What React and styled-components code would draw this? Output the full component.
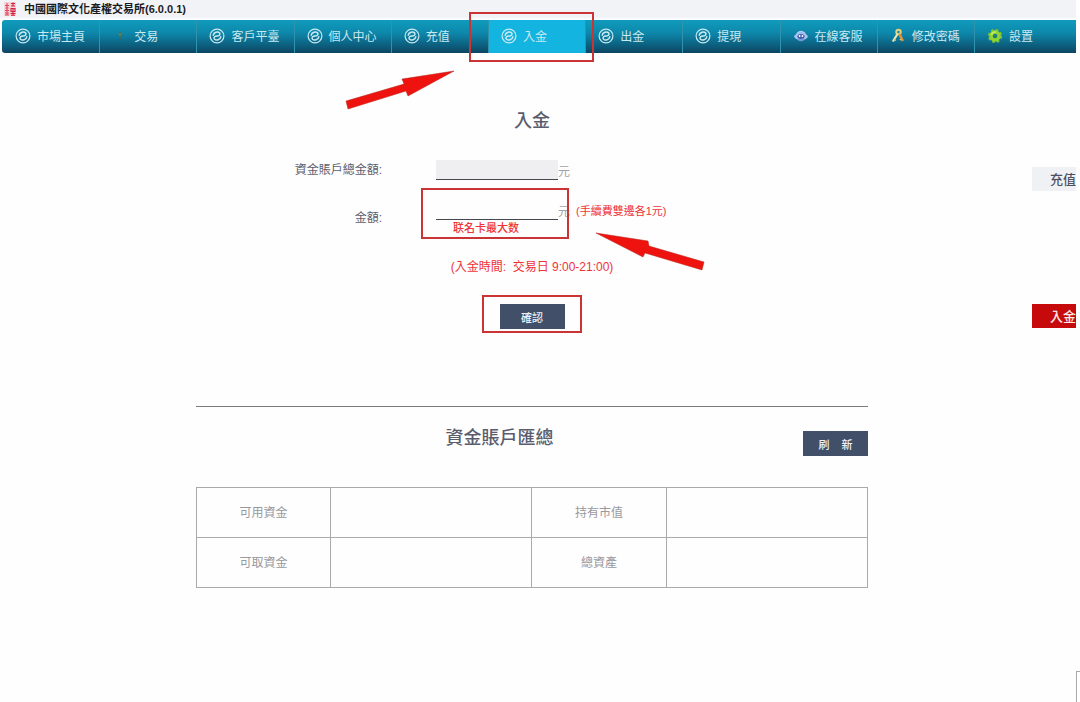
import React from "react";
import styled, { createGlobalStyle, css } from "styled-components";

const GlobalStyle = createGlobalStyle`
  *, *::before, *::after { box-sizing: border-box; }
  html { background: #fefefe; }
  body {
    margin: 0;
    font-family: "Liberation Sans", "Noto Sans CJK TC", sans-serif;
    font-size: 12px;
    color: #5d606e;
  }
  button, input { font: inherit; }
`;

const navy = "#414f68";
const alertRed = "#ee3338";
const markRed = "#cb3434";

const Page = styled.div`
  position: relative;
  min-height: 100vh;
  padding-right: 4px;
  overflow-x: clip;
`;

const TitleBar = styled.header`
  display: flex;
  align-items: center;
  gap: 8px;
  height: 20px;
  padding: 0 4px 2px;
  background: linear-gradient(#f2f3f7 18px, #fafcfd 18px);
`;

const AppTitle = styled.h1`
  margin: 0;
  font-size: 11px;
  line-height: 16px;
  font-weight: 700;
  color: #1b1b1f;
`;

const Nav = styled.nav`
  display: flex;
  height: 33px;
  margin-left: 2px;
  border-radius: 3px 0 0 3px;
  background: linear-gradient(#109bbd, #0d87aa 40%, #0d5675 85%, #0c4560);
`;

const NavItem = styled.div`
  position: relative;
  flex: 0 0 9.05%;
  border-left: 1px solid #2f93ae;

  &:first-child { border-left-color: transparent; }
  &:last-child { flex: 1; }
`;

const NavLink = styled.a`
  display: flex;
  align-items: center;
  gap: 6px;
  height: 100%;
  padding: 0 0 2px 12px;
  font-size: 12px;
  white-space: nowrap;
  text-decoration: none;
  color: #c9e9f2;
  ${(p) => p.$active && css`background: #13b4df;`}

  svg { flex: none; }
`;

const Body = styled.div`
  display: grid;
  grid-template-columns: 49fr 168fr 52fr;
`;

const Main = styled.main`
  grid-column: 2;
  min-width: 0;
`;

const Heading = styled.h2`
  margin: 0;
  font-size: 18px;
  line-height: 24px;
  font-weight: 500;
  text-align: center;
  color: #5a5d6e;
`;

const DepositForm = styled.form`
  display: flex;
  flex-direction: column;
  padding: 56px 0 77px;
  border-bottom: 1px solid #777b7e;
`;

const Fields = styled.div`
  display: grid;
  grid-template-columns: 186px 1fr;
  column-gap: 54px;
  row-gap: 20px;
  align-items: center;
  margin-top: 27px;
`;

const Label = styled.label`
  text-align: right;
  line-height: 20px;
`;

const Field = styled.div`
  position: relative;
`;

const FieldLine = styled.div`
  display: flex;
  align-items: center;
  height: 20px;
  white-space: nowrap;
`;

const AmountInput = styled.input`
  width: 122px;
  height: 20px;
  padding: 0 4px;
  border: 0;
  border-bottom: 1px solid #45494e;
  border-radius: 0;
  outline: none;
  background: ${(p) => (p.readOnly ? "#efeff1" : "transparent")};
`;

const Unit = styled.span`
  width: 12px;
  color: #a2a2a8;
`;

const FeeHint = styled.span`
  margin-left: 6px;
  font-size: 11px;
  color: ${alertRed};
`;

const CardNote = styled.div`
  padding-left: 17px;
  font-size: 11px;
  line-height: 16px;
  font-weight: 500;
  color: ${alertRed};
`;

const TimeHint = styled.p`
  margin: 22px 0 28px;
  line-height: 18px;
  text-align: center;
  color: ${alertRed};
`;

const ActionButton = styled.button`
  width: 65px;
  height: 25px;
  padding: 0;
  border: 0;
  background: ${navy};
  color: #eef1f6;
  font-size: 11px;
  font-weight: 500;
  white-space: pre;
  cursor: pointer;
`;

const Confirm = styled.div`
  position: relative;
  align-self: center;
  display: flex;
`;

const Mark = styled.span`
  position: absolute;
  z-index: 2;
  inset: ${(p) => p.$inset};
  width: ${(p) => p.$width};
  border: 2px solid ${markRed};
  pointer-events: none;
`;

const Arrow = styled.svg`
  position: absolute;
  z-index: 2;
  left: ${(p) => p.$left};
  top: ${(p) => p.$top};
  fill: #ee130e;
  stroke: #b5221c;
  stroke-width: 0.5;
  pointer-events: none;
`;

const Summary = styled.section`
  padding-top: 19px;
`;

const SummaryHead = styled.div`
  display: flex;
  height: 30px;

  ${Heading} { flex: 1; }
  ${ActionButton} { align-self: flex-end; }
`;

const FundsTable = styled.table`
  width: 100%;
  margin-top: 31px;
  border-collapse: collapse;
  table-layout: fixed;

  th, td {
    height: 50px;
    padding: 0 0 2px;
    border: 1px solid #a9a9ac;
  }
  th {
    width: 20%;
    font-size: 12px;
    font-weight: 400;
    color: #98989d;
  }
`;

const SideRail = styled.aside`
  display: flex;
  flex-direction: column;
  align-items: flex-end;
  gap: 113px;
  padding-top: 114px;
`;

const SideButton = styled.button`
  width: 44px;
  height: 24px;
  padding: 0 0 2px 18px;
  border: 0;
  overflow: hidden;
  white-space: nowrap;
  text-align: left;
  font-size: 13px;
  font-weight: 500;
  background: ${(p) => (p.$primary ? "#c60a0c" : "#f0f1f4")};
  color: ${(p) => (p.$primary ? "#ffe9e6" : "#4d505f")};
  cursor: pointer;
`;

const CornerPanel = styled.div`
  position: absolute;
  right: 0;
  bottom: 0;
  width: 4px;
  height: 31px;
  border-left: 1px solid #a8a8a8;
  border-top: 1px solid #a8a8a8;
`;

const SealIcon = () => (
  <svg width="12" height="14" viewBox="0 0 12 14" aria-hidden="true">
    <rect width="12" height="14" fill="#f8d3d8" />
    <g fill="none" stroke="#d94a5e" strokeWidth="1.1">
      <path d="M3 1v2M1 3.500h4M1.500 6h3M3 4v4M1 8.500h4M1 11h4M3 9v4M1 13h4" />
      <path d="M7 1.500h4M9 .5v4M7 4h4M7 6.500h4v3H7zM9 6v7M6.500 11.500h5M7 13.300h4" stroke="#cf2240" />
    </g>
  </svg>
);

const SwirlIcon = () => (
  <svg width="16" height="16" viewBox="0 0 16 16" fill="none" stroke="#cdeaf2" aria-hidden="true">
    <circle cx="8" cy="8" r="6.900" strokeWidth="1.200" />
    <path d="M4.200 7.200C4.700 4.200 8.800 3 10.700 5.100c1 1.700-.8 2.900-2.700 2.900s-3.700 1.200-2.700 2.900c1.900 2.100 6 .9 6.500-2.100" strokeWidth="1.500" strokeLinecap="round" />
  </svg>
);

const TradeIcon = () => (
  <svg width="16" height="16" viewBox="0 0 16 16" aria-hidden="true">
    <path d="M8 3.500v9" stroke="#2c6a66" strokeWidth="1.500" />
    <path d="M6.500 5h3L8 10z" fill="#6e8140" />
  </svg>
);

const SupportIcon = () => (
  <svg width="16" height="16" viewBox="0 0 16 16" aria-hidden="true">
    <path d="M3.500 8a4.500 4.500 0 0 1 9 0" fill="#8db3e8" stroke="#b4cdf4" strokeWidth="1.400" />
    <ellipse cx="8" cy="8.600" rx="6.800" ry="3.400" fill="#a9c3f2" />
    <ellipse cx="8" cy="8.400" rx="3.600" ry="2.500" fill="#4360ae" />
    <circle cx="6.600" cy="8" r=".9" fill="#fff" />
    <circle cx="9.400" cy="8" r=".9" fill="#fff" />
    <path d="M5 12.500c1.800 1 4.200 1 6 0l-1-1.500H6z" fill="#7898da" />
  </svg>
);

const KeysIcon = () => (
  <svg width="16" height="16" viewBox="0 0 16 16" fill="none" aria-hidden="true">
    <circle cx="8.500" cy="4" r="2.200" stroke="#e5d27c" strokeWidth="2" />
    <path d="M7.500 6 2.800 13.500" stroke="#e9e5b4" strokeWidth="2.200" />
    <path d="m9.500 6 3.300 7" stroke="#d9923c" strokeWidth="2.600" />
    <path d="m4.300 11.500 1.700 1M11.500 11l-1.800 1" stroke="#dcc46a" strokeWidth="1.300" />
  </svg>
);

const GearIcon = () => (
  <svg width="16" height="16" viewBox="0 0 16 16" aria-hidden="true">
    <circle cx="8" cy="8" r="5.800" fill="none" stroke="#7fc42c" strokeWidth="2.600" strokeDasharray="2.500 2.055" />
    <circle cx="8" cy="8" r="4" fill="none" stroke="#8fd431" strokeWidth="3.600" />
    <path d="M4.500 7A4 4 0 0 1 9 4" fill="none" stroke="#c9ef72" strokeWidth="1.300" />
    <ellipse cx="8.300" cy="8" rx="2.100" ry="1.500" fill="#2b7772" transform="rotate(-30 8.300 8)" />
  </svg>
);

const navItems = [
  { label: "市場主頁", Icon: SwirlIcon },
  { label: "交易", Icon: TradeIcon },
  { label: "客戶平臺", Icon: SwirlIcon },
  { label: "個人中心", Icon: SwirlIcon },
  { label: "充值", Icon: SwirlIcon },
  { label: "入金", Icon: SwirlIcon, active: true },
  { label: "出金", Icon: SwirlIcon },
  { label: "提現", Icon: SwirlIcon },
  { label: "在線客服", Icon: SupportIcon },
  { label: "修改密碼", Icon: KeysIcon },
  { label: "設置", Icon: GearIcon },
];

const fundRows = [
  ["可用資金", "持有市值"],
  ["可取資金", "總資產"],
];

export default function App() {
  return (
    <Page lang="zh-Hant">
      <GlobalStyle />
      <TitleBar>
        <SealIcon />
        <AppTitle>中國國際文化產權交易所(6.0.0.1)</AppTitle>
      </TitleBar>

      <Nav>
        {navItems.map(({ label, Icon, active }) => (
          <NavItem key={label}>
            <NavLink href="#" $active={active} aria-current={active ? "page" : undefined}>
              <Icon />
              {label}
            </NavLink>
            {active && (
              <>
                <Mark $inset="-8px -9px -9px -20px" />
                <Arrow $left="-144px" $top="50px" width="110" height="40" viewBox="0 0 110 40">
                  <path d="M109 1 57 9l2 5L1 31l2 8 58-18 2 5z" />
                </Arrow>
              </>
            )}
          </NavItem>
        ))}
      </Nav>

      <Body>
        <Main>
          <DepositForm onSubmit={(e) => e.preventDefault()}>
            <Heading>入金</Heading>
            <Fields>
              <Label htmlFor="total">資金賬戶總金額:</Label>
              <FieldLine>
                <AmountInput id="total" readOnly />
                <Unit>元</Unit>
              </FieldLine>
              <Label htmlFor="amount">金額:</Label>
              <Field>
                <FieldLine>
                  <AmountInput id="amount" />
                  <Unit>元</Unit>
                  <FeeHint>(手續費雙邊各1元)</FeeHint>
                </FieldLine>
                <CardNote>联名卡最大数</CardNote>
                <Mark $inset="-12px auto -3px -15px" $width="148px" />
                <Arrow $left="159px" $top="32px" width="110" height="40" viewBox="0 0 110 40">
                  <path d="m1 1 52 8 1 5 55 16-2 8-57-17-2 4z" />
                </Arrow>
              </Field>
            </Fields>
            <TimeHint>(入金時間:&nbsp; 交易日 9:00-21:00)</TimeHint>
            <Confirm>
              <ActionButton type="submit">確認</ActionButton>
              <Mark $inset="-9px -17px -4px -18px" />
            </Confirm>
          </DepositForm>

          <Summary>
            <SummaryHead>
              <Heading>資金賬戶匯總</Heading>
              <ActionButton type="button">{"刷    新"}</ActionButton>
            </SummaryHead>
            <FundsTable>
              <colgroup>
                <col width="20%" />
                <col width="30%" />
                <col width="20%" />
                <col width="30%" />
              </colgroup>
              <tbody>
                {fundRows.map(([left, right]) => (
                  <tr key={left}>
                    <th scope="row">{left}</th>
                    <td />
                    <th scope="row">{right}</th>
                    <td />
                  </tr>
                ))}
              </tbody>
            </FundsTable>
          </Summary>
        </Main>

        <SideRail>
          <SideButton type="button">充值</SideButton>
          <SideButton type="button" $primary>入金</SideButton>
        </SideRail>
      </Body>
      <CornerPanel />
    </Page>
  );
}
